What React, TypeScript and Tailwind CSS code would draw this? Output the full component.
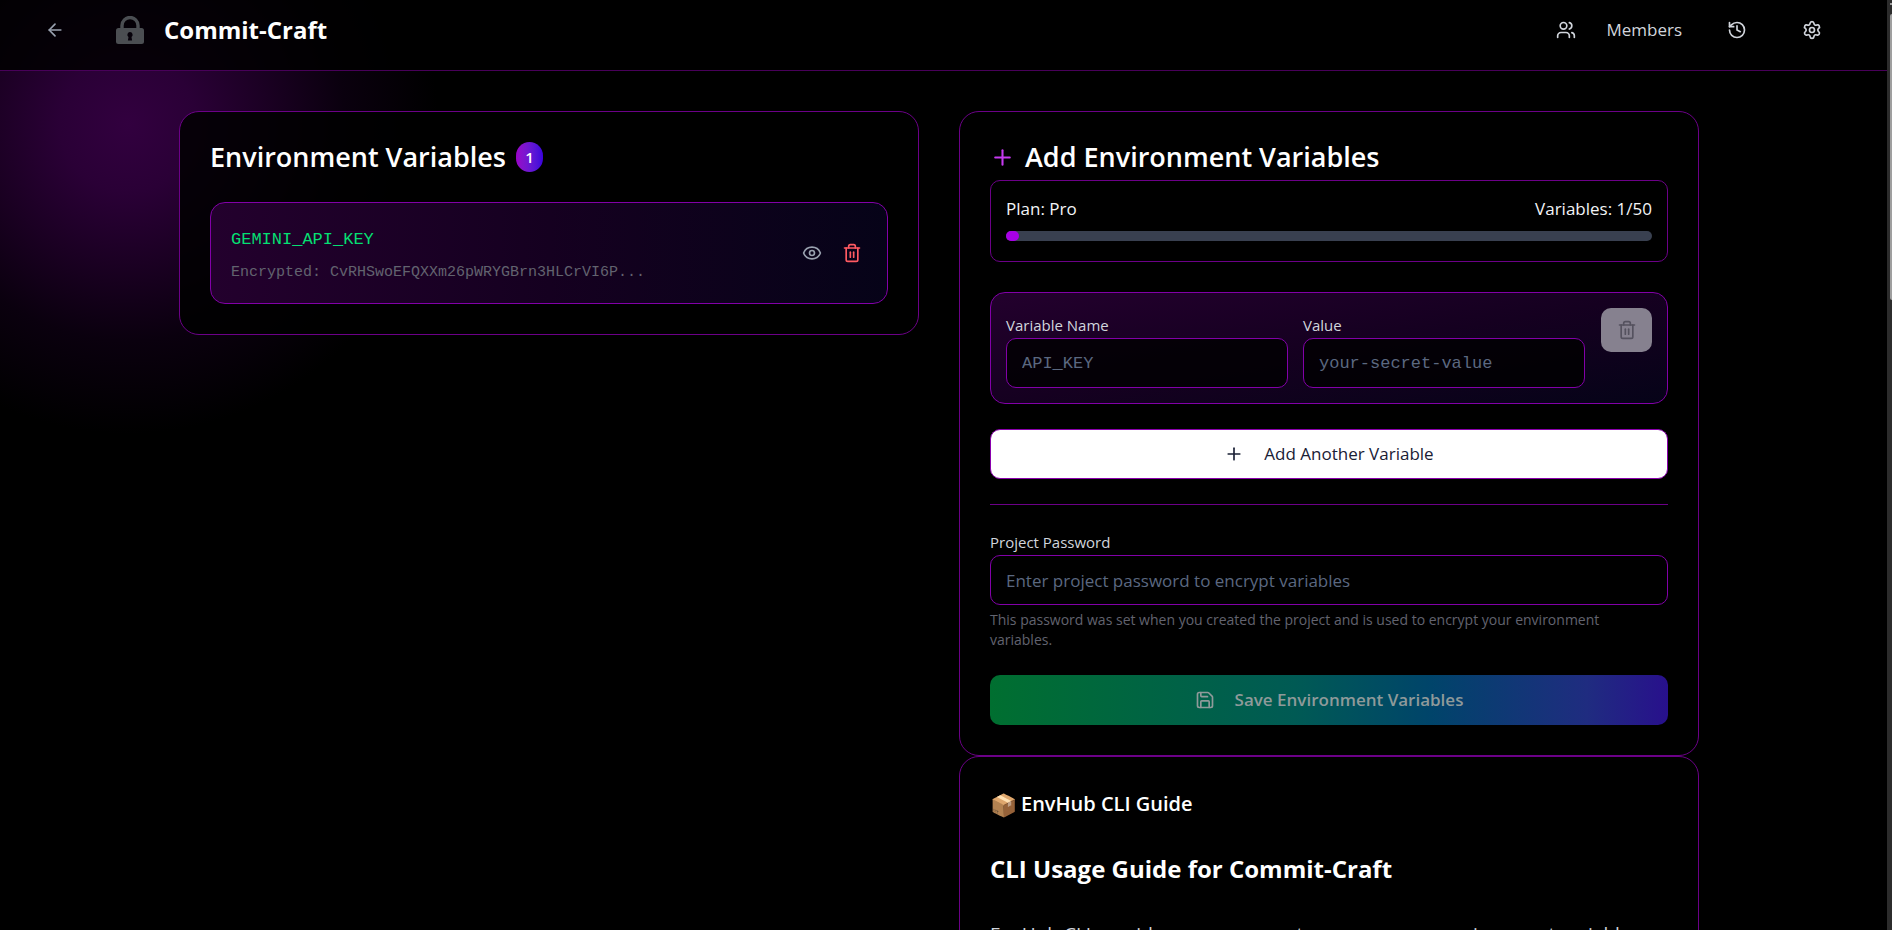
import React from "react";
import { ArrowLeft, Eye, History, Plus, Save, Settings, Trash2, Users } from "lucide-react";

const variables = [{ name: "GEMINI_API_KEY", preview: "CvRHSwoEFQXXm26pWRYGBrn3HLCrVI6P..." }];
const limit = 50;

function LockLogo() {
  return (
    <svg viewBox="0 0 28 28" className="size-7" aria-hidden="true">
      <path d="M6 13V9.5a8 8 0 0 1 16 0V13" fill="none" stroke="#4b4e52" strokeWidth="3.4" />
      <rect x="0" y="12" width="28" height="16" rx="2.5" fill="#4b4e52" />
      <path d="M14 16a2.7 2.7 0 0 1 1.5 4.9l.6 3.6h-4.2l.6-3.6A2.7 2.7 0 0 1 14 16z" fill="#06010a" />
    </svg>
  );
}

function Header() {
  return (
    <header className="relative border-b border-[#480059] bg-black/85 pb-2.5">
      <div className="flex h-[60px] items-center justify-between pl-[45px] pr-[65px]">
        <div className="flex items-center">
          <button type="button" aria-label="Back" className="mr-[51px] text-[#99a1af]">
            <ArrowLeft size={20} />
          </button>
          <LockLogo />
          <h1 className="ml-5 text-[24px] leading-[28px] font-bold text-white">Commit-Craft</h1>
        </div>
        <nav className="flex items-center text-[#d1d5dc]">
          <button type="button" className="flex items-center gap-[30px] text-[17px] leading-6">
            <Users size={20} />
            Members
          </button>
          <button type="button" aria-label="History" className="ml-[45px]">
            <History size={20} />
          </button>
          <button type="button" aria-label="Settings" className="ml-[55px]">
            <Settings size={20} />
          </button>
        </nav>
      </div>
    </header>
  );
}

function Card({ children }: { children: React.ReactNode }) {
  return <section className="rounded-[20px] border border-[#6c0088] bg-black/85 p-[30px]">{children}</section>;
}

function VariableList() {
  return (
    <Card>
      <h2 className="flex h-[30px] items-center gap-2.5 text-[27px] leading-[30px] font-semibold text-white">
        Environment Variables
        <span className="flex h-[30px] w-[27px] items-center justify-center rounded-full bg-linear-to-r from-[#9a00c8] to-[#3a00dc] text-[15px] font-semibold">
          {variables.length}
        </span>
      </h2>
      <ul className="mt-[30px]">
        {variables.map((v) => (
          <li
            key={v.name}
            className="flex h-[102px] items-center justify-between rounded-[15px] border border-[#8200a8] bg-linear-to-r from-[#23002d] via-[#150020] to-[#060318] px-5"
          >
            <div className="pt-1">
              <p className="font-['Liberation_Mono',monospace] text-[17px] leading-[26px] text-[#05df72]">{v.name}</p>
              <p className="mt-2.5 font-['Liberation_Mono',monospace] text-[15px] leading-5 text-[#62636f]">
                Encrypted: {v.preview}
              </p>
            </div>
            <div className="flex gap-5 pr-[5px]">
              <button type="button" aria-label="Show value" className="text-[#99a1af]">
                <Eye size={20} />
              </button>
              <button type="button" aria-label="Delete variable" className="text-[#ff5a62]">
                <Trash2 size={20} />
              </button>
            </div>
          </li>
        ))}
      </ul>
    </Card>
  );
}

const labelStyle = "block text-[15px] leading-5 font-medium text-[#d1d5dc]";
const inputStyle =
  "mt-[3px] block h-[50px] w-full rounded-[10px] border border-[#8200a8] bg-black/80 px-[15px] text-white outline-none placeholder:text-[#5b6880]";

function AddVariables() {
  return (
    <Card>
      <h2 className="flex h-[30px] items-center gap-2.5 text-[27px] leading-[30px] font-semibold text-white">
        <Plus size={25} className="text-[#c63af0]" />
        Add Environment Variables
      </h2>
      <div className="mt-2 h-[82px] rounded-[10px] border border-[#6c0088] px-[15px] pt-[15px]">
        <div className="flex justify-between text-[17px] leading-[25px] text-[#f3f4f6]">
          <span>Plan: Pro</span>
          <span>
            Variables: {variables.length}/{limit}
          </span>
        </div>
        <div className="mt-2.5 h-2.5 rounded-full bg-[#394050]">
          <div
            className="h-2.5 rounded-full bg-[#a800e6]"
            style={{ width: `${(variables.length / limit) * 100}%` }}
          />
        </div>
      </div>

      <form onSubmit={(e) => e.preventDefault()}>
        <div className="mt-[30px] flex gap-4 rounded-[15px] border border-[#8200a8] bg-linear-to-br from-[#23002d] via-[#150020] to-[#060318] p-[15px]">
          <div className="grid flex-1 grid-cols-2 gap-[15px] pt-[7px]">
            <div>
              <label htmlFor="name" className={labelStyle}>Variable Name</label>
              <input id="name" placeholder="API_KEY" className={`${inputStyle} font-['Liberation_Mono',monospace] text-[17px]`} />
            </div>
            <div>
              <label htmlFor="value" className={labelStyle}>Value</label>
              <input id="value" placeholder="your-secret-value" className={`${inputStyle} font-['Liberation_Mono',monospace] text-[17px]`} />
            </div>
          </div>
          <button
            type="button"
            disabled
            aria-label="Remove row"
            className="flex h-[44px] w-[51px] items-center justify-center rounded-[10px] bg-[#86818f] text-[#55525f]"
          >
            <Trash2 size={20} />
          </button>
        </div>

        <button
          type="button"
          className="mt-[25px] flex h-[50px] w-full items-center justify-center gap-5 rounded-[10px] border border-[#8a00ad] bg-white text-[17px] font-medium text-[#1a2035]"
        >
          <Plus size={20} />
          Add Another Variable
        </button>

        <div className="mt-[25px] border-t border-[#6c0088] pt-[27px]">
          <label htmlFor="password" className={labelStyle}>Project Password</label>
          <input
            id="password"
            type="password"
            placeholder="Enter project password to encrypt variables"
            className={`${inputStyle} text-[17px]`}
          />
          <p className="mt-[5px] pr-10 text-[14px] leading-5 text-[#62636f]">
            This password was set when you created the project and is used to encrypt your environment variables.
          </p>
        </div>

        <button
          type="submit"
          disabled
          className="mt-[25px] flex h-[50px] w-full items-center justify-center gap-5 rounded-[10px] bg-[linear-gradient(to_right,#006f30,#005a54_45%,#00446a_65%,#1f2c80_88%,#28108c)] text-[17px] font-semibold text-[#8f9a9a]"
        >
          <Save size={20} />
          Save Environment Variables
        </button>
      </form>
    </Card>
  );
}

function CliGuide() {
  return (
    <Card>
      <h2 className="mt-0.5 flex items-center gap-1 text-[20px] leading-[30px] font-semibold text-white">
        <span className="text-[22px]">📦</span>
        EnvHub CLI Guide
      </h2>
      <h3 className="mt-[35px] text-[24px] leading-[30px] font-bold text-white">CLI Usage Guide for Commit-Craft</h3>
      <p className="mt-[35px] text-[19px] leading-[30px] text-[#d1d5dc]">
        EnvHub CLI provides a secure way to manage your environment variables.
      </p>
    </Card>
  );
}

export default function App() {
  return (
    <div className="flex h-screen overflow-hidden bg-black font-['Open_Sans',sans-serif]">
      <div className="min-w-0 flex-1 overflow-hidden bg-[radial-gradient(circle_310px_at_128px_124px,#32003f_0%,#2a0036_22%,#1b0023_45%,#0a000e_70%,#000_100%)]">
        <Header />
        <main className="pt-10 pr-[25px] pl-4">
          <div className="mx-auto grid max-w-[1520px] grid-cols-2 items-start gap-10">
            <VariableList />
            <div>
              <AddVariables />
              <CliGuide />
            </div>
          </div>
        </main>
      </div>
      <div aria-hidden="true" className="flex w-[5px] flex-col items-end bg-[#2c2c2c] pt-[3px]">
        <div className="h-0.5 w-0.5 bg-[#9f9f9f]" />
        <div className="mt-[9px] h-[286px] w-0.5 rounded-l-full bg-[#9f9f9f]" />
      </div>
    </div>
  );
}
